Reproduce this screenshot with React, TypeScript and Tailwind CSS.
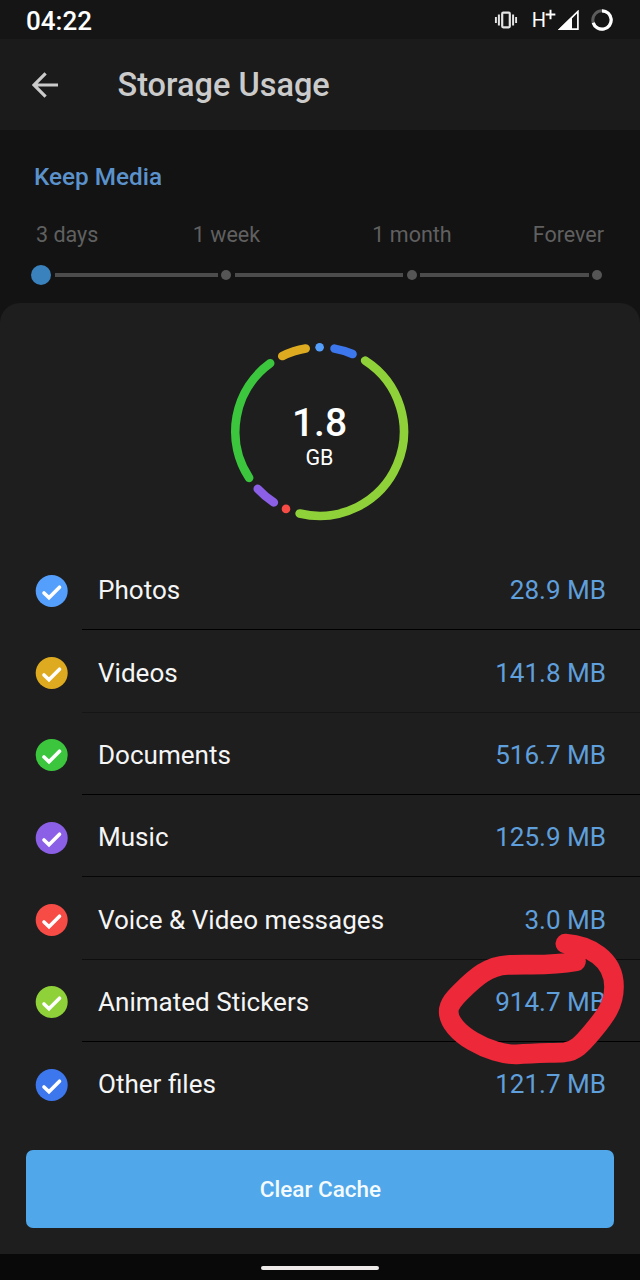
import React from 'react';
import clsx from 'clsx';

type Category = {
	name: string;
	size: string;
	color: string;
	// arc on the chart, degrees clockwise from the top
	from: number;
	to: number;
	divider?: string;
};

const categories: Category[] = [
	{ name: 'Photos', size: '28.9 MB', color: '#559ffc', from: 0, to: 0 },
	{
		name: 'Videos',
		size: '141.8 MB',
		color: '#deab20',
		from: 333.7,
		to: 350.5,
		divider: 'border-black',
	},
	{
		name: 'Documents',
		size: '516.7 MB',
		color: '#3bc63e',
		from: 236.7,
		to: 324.1,
		divider: 'border-[#151515]',
	},
	{
		name: 'Music',
		size: '125.9 MB',
		color: '#8b5fe6',
		from: 212.9,
		to: 227.2,
		divider: 'border-black',
	},
	{
		name: 'Voice & Video messages',
		size: '3.0 MB',
		color: '#f74b45',
		from: 203.5,
		to: 203.5,
		divider: 'border-[#060606]',
	},
	{
		name: 'Animated Stickers',
		size: '914.7 MB',
		color: '#8fd139',
		from: 32.7,
		to: 193.7,
		divider: 'border-[#0e0e0e]',
	},
	{
		name: 'Other files',
		size: '121.7 MB',
		color: '#3d77ee',
		from: 10.2,
		to: 23,
		divider: 'border-black',
	},
];

const CENTER_X = 89.6;
const CENTER_Y = 89.6;
const RADIUS = 84.3;

const point = (deg: number) => {
	const rad = (deg * Math.PI) / 180;
	return `${(CENTER_X + RADIUS * Math.sin(rad)).toFixed(2)} ${(CENTER_Y - RADIUS * Math.cos(rad)).toFixed(2)}`;
};

const arc = (from: number, to: number) => {
	if (from === to) return `M${point(from)}h0.01`;
	return `M${point(from)}A${RADIUS} ${RADIUS} 0 ${to - from > 180 ? 1 : 0} 1 ${point(to)}`;
};

const StatusBar = () => (
	<div className="flex h-[39px] shrink-0 items-center justify-between bg-[#151515] pr-[27px] pl-[26px] text-white">
		<span className="pt-[3px] text-[26px] leading-8 font-medium">04:22</span>
		<div className="flex items-center">
			<svg className="h-6 w-6" viewBox="0 0 24 24" fill="none" stroke="#e4e4e4">
				<rect x="8.2" y="4.7" width="7.6" height="14.6" rx="1" strokeWidth="2.2" />
				<path d="M4.9 6.5v11M19.1 6.5v11" strokeWidth="2" />
				<path d="M1.9 9v6M22.1 9v6" strokeWidth="1.9" />
			</svg>
			<div className="ml-[14px] flex items-start">
				<span className="text-[20px] leading-6">H</span>
				<svg
					className="mt-px -ml-px h-[11px] w-[11px]"
					viewBox="0 0 10 10"
					stroke="white"
					strokeWidth="1.8"
				>
					<path d="M5 .6v8.8M.6 5h8.8" />
				</svg>
			</div>
			<svg className="ml-[2px] h-5 w-[21px]" viewBox="0 0 21 20" fill="none">
				<path d="M0 20L14 6.5V20z" fill="white" />
				<path d="M2 19.1H19.9V1.5z" stroke="white" strokeWidth="1.7" />
			</svg>
			<svg className="ml-[12px] h-[22px] w-[22px]" viewBox="0 0 22 22" fill="none">
				<circle cx="11" cy="11" r="9.2" stroke="#5c5c5c" strokeWidth="3" />
				<path d="M11 1.8a9.2 9.2 0 1 1-8.8 11.9" stroke="white" strokeWidth="3.2" />
			</svg>
		</div>
	</div>
);

const Header = () => (
	<header className="flex h-[91px] shrink-0 items-center bg-[#1b1b1b] pl-8 text-[#cbcbcb]">
		<svg
			className="h-[26px] w-[26px]"
			viewBox="0 0 26 26"
			fill="none"
			stroke="currentColor"
			strokeWidth="3.2"
		>
			<path d="M26 13H2.5M13.6 1.3L1.9 13l11.7 11.7" />
		</svg>
		<h1 className="ml-[59.5px] text-[32.5px] leading-10 font-medium">Storage Usage</h1>
	</header>
);

const Stop = () => (
	<div className="mx-[3.5px] size-[10px] shrink-0 rounded-full bg-[#555]" />
);

const KeepMedia = () => (
	<section className="h-[173px] shrink-0">
		<h2 className="pt-[31px] pl-[34px] text-[24.3px] leading-8 font-medium text-[#5b92cb]">
			Keep Media
		</h2>
		<div className="mt-7 flex px-9 text-[21.5px] leading-7 text-[#606060]">
			<span className="w-[98px]">3 days</span>
			<span className="w-[185px] text-center">1 week</span>
			<span className="w-[186px] text-center">1 month</span>
			<span className="flex-1 text-right">Forever</span>
		</div>
		<div className="mt-4 flex h-5 items-center pl-[31px]">
			<div className="mr-1 size-5 shrink-0 rounded-full bg-[#3a82be]" />
			<div className="h-1 w-[162.5px] bg-[#4c4c4c]" />
			<Stop />
			<div className="h-1 w-[168.5px] bg-[#4c4c4c]" />
			<Stop />
			<div className="h-1 w-[168.5px] bg-[#4c4c4c]" />
			<Stop />
		</div>
	</section>
);

const UsageChart = () => (
	<div className="grid h-[180px] w-[180px] place-items-center self-center">
		<svg
			className="col-start-1 row-start-1 size-[180px]"
			viewBox="0 0 180 180"
			fill="none"
			strokeWidth="8.6"
			strokeLinecap="round"
		>
			{categories.map((c) => (
				<path key={c.name} d={arc(c.from, c.to)} stroke={c.color} />
			))}
		</svg>
		<div className="col-start-1 row-start-1 flex flex-col items-center pt-[12px] pr-[1px] text-white">
			<span className="text-[39px] leading-10 font-medium">1.8</span>
			<span className="pt-px text-[21.5px] leading-7">GB</span>
		</div>
	</div>
);

const Row = ({ category }: { category: Category }) => (
	<li className="flex h-[82.333px] pl-[35.5px]">
		<svg className="mt-[27.8px] size-8 shrink-0 overflow-visible" viewBox="0 0 32 32" fill="none">
			<circle cx="15.7" cy="16" r="16" fill={category.color} />
			<path
				d="M8 18l5 4.8L23.5 12.2"
				stroke="white"
				strokeWidth="3.6"
				strokeLinecap="round"
			/>
		</svg>
		<div
			className={clsx(
				'ml-[14.5px] flex flex-1 items-center justify-between pt-[4.5px] pr-[34px] pl-4 text-[26.05px]',
				category.divider && ['border-t', category.divider],
			)}
		>
			<span className="text-[#f5f5f5]">{category.name}</span>
			<span className="text-[#5f9fdc]">{category.size}</span>
		</div>
	</li>
);

const Scribble = () => (
	<svg
		className="pointer-events-none absolute top-[920px] left-[420px] h-[190px] w-[220px]"
		viewBox="0 0 660 570"
		fill="none"
		stroke="#ec2839"
		strokeWidth="59"
		strokeLinecap="round"
		strokeLinejoin="round"
	>
		<path d="M436 71C505 76 582 115 582 200C582 255 556 288 518 334C485 374 465 394 434 397C395 399 350 399 290 403C210 405 86 338 86 275C86 252 104 234 122 216C168 170 205 138 262 135C330 131 380 140 468 124" />
	</svg>
);

export default function App() {
	return (
		<div className="relative flex h-[1280px] w-[640px] flex-col overflow-hidden bg-[#131313] font-['Roboto',sans-serif]">
			<StatusBar />
			<Header />
			<KeepMedia />
			<main className="flex flex-1 flex-col rounded-t-[20px] bg-[#1e1e1e] pt-[38.5px]">
				<UsageChart />
				<ul className="mt-[25.5px]">
					{categories.map((c) => (
						<Row key={c.name} category={c} />
					))}
				</ul>
				<button className="mx-[26px] mt-[26.5px] h-[78px] rounded-[7px] bg-[#50a7ea] pt-[2px] pl-[1px] text-[22.5px] font-medium text-[#f4fbff]">
					Clear Cache
				</button>
			</main>
			<div className="flex h-[26px] shrink-0 items-center justify-center bg-[#090909] pt-[2px]">
				<div className="h-1 w-[118px] rounded-full bg-[#eeeaea]" />
			</div>
			<Scribble />
		</div>
	);
}
